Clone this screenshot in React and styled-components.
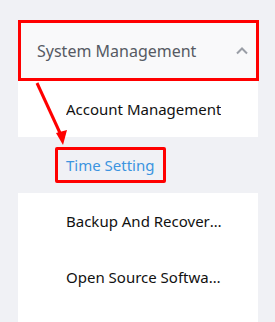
import React from "react";
import styled, { createGlobalStyle } from "styled-components";

const Global = createGlobalStyle`
  html, body { margin: 0; padding: 0; }
  body {
    background: #f0f1f5;
    font-family: "Noto Sans", "Open Sans", sans-serif;
    width: 275px;
    height: 322px;
    overflow: hidden;
  }
`;

const Page = styled.div`
  position: relative;
  height: 322px;
  padding: 20px 17px 0 18px;
  box-sizing: border-box;
`;

const Panel = styled.nav`
  width: 240px;
  height: 302px;
  background: #fff;
  display: flex;
  flex-direction: column;
`;

const Header = styled.div`
  height: 61px;
  display: flex;
  align-items: center;
  justify-content: space-between;
  padding: 0 10px 0 19px;
  background: #f9f9fa;
  color: #565a63;
  font-size: 16px;
  outline: 3px solid #ff0000;
  outline-offset: -3px;
  margin-right: -1px;
`;

const Item = styled.div`
  height: 56px;
  display: flex;
  align-items: center;
  padding: 0 34px 0 48px;
  font-size: 15px;
  color: ${(p) => (p.$active ? "#3c94e0" : "#111")};
  background: ${(p) => (p.$active ? "#f0f1f5" : "#fff")};
`;

const Label = styled.span`
  position: relative;
  white-space: nowrap;
  overflow: ${(p) => (p.$marked ? "visible" : "hidden")};
  text-overflow: ellipsis;
  ${(p) =>
    p.$marked &&
    `
    &::after {
      content: "";
      position: absolute;
      left: -11px;
      right: -11px;
      top: -8px;
      bottom: -8px;
      border: 3px solid #ff0000;
      border-radius: 2px;
    }
  `}
`;

const Arrow = styled.svg`
  position: absolute;
  left: 0;
  top: 0;
  pointer-events: none;
`;

export default function App() {
  return (
    <>
      <Global />
      <Page>
        <Panel>
          <Header>
            <span>System Management</span>
            <svg width="14" height="9" viewBox="0 0 14 9">
              <path d="M2 7.5 L7 2.5 L12 7.5" fill="none" stroke="#9a9ea6" strokeWidth="2" />
            </svg>
          </Header>
          <Item>
            <Label>Account Management</Label>
          </Item>
          <Item $active>
            <Label $marked>Time Setting</Label>
          </Item>
          <Item>
            <Label>Backup And Recovery Settings</Label>
          </Item>
          <Item>
            <Label>Open Source Software Notice</Label>
          </Item>
        </Panel>
        <Arrow width="275" height="322" viewBox="0 0 275 322">
          <line x1="37" y1="83" x2="60" y2="133" stroke="#ff0000" strokeWidth="3" />
          <polygon points="56,133 67,130 63,145" fill="#ff0000" />
        </Arrow>
      </Page>
    </>
  );
}
